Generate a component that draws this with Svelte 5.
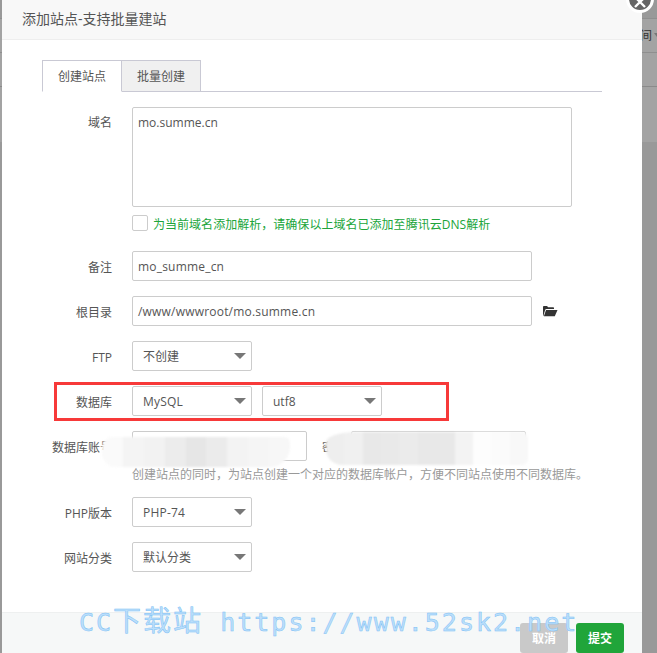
<script>
	const leftBlur = ['#fafafa', '#f4f4f4', '#f2f2f2', '#ececec', '#e6e6e6', '#ebebeb', '#f3f3f3', '#f5f5f5', '#f7f7f7'];
	const rightBlur = ['#eeeeee', '#f0f0f0', '#e8e8e8', '#e9e9e9', '#ebebeb', '#e8e8e8', '#e8e8e8', '#f3f3f3', '#fdfdfd', '#fbfbfb', '#f8f8f8'];
</script>

<div class="backdrop">
	<div class="page-lines">
		<span class="peek">间</span>
		<span class="caret"></span>
	</div>

	<div class="modal">
		<div class="title">添加站点-支持批量建站</div>

		<div class="body">
			<div class="tabs">
				<div class="tab active">创建站点</div>
				<div class="tab">批量创建</div>
			</div>

			<div class="form">
				<div class="row domain">
					<span class="label">域名</span>
					<div class="field textarea">mo.summe.cn</div>
				</div>
				<div class="row check">
					<span class="box"></span>
					<span class="tip">为当前域名添加解析，请确保以上域名已添加至腾讯云DNS解析</span>
				</div>
				<div class="row">
					<span class="label">备注</span>
					<div class="field wide latin">mo_summe_cn</div>
				</div>
				<div class="row">
					<span class="label">根目录</span>
					<div class="field wide latin">/www/wwwroot/mo.summe.cn</div>
					<svg class="folder" width="16" height="12" viewBox="0 0 16 12">
						<path d="M1 11V2.2C1 1.5 1.4 1 2 1h3l1.200 1.300H11c.6 0 1 .4 1 1V4H4.500C3.800 4 3.500 4.300 3.200 4.800L1.300 11z" fill="#333" />
						<path d="M4 5h11.500l-2.700 6.300H1.900z" fill="#333" />
					</svg>
				</div>
				<div class="row">
					<span class="label">FTP</span>
					<div class="select">不创建</div>
				</div>
				<div class="row">
					<span class="label">数据库</span>
					<div class="select latin">MySQL</div>
					<div class="select second">utf8</div>
					<div class="highlight"></div>
				</div>
				<div class="row account">
					<span class="label">数据库账号</span>
					<div class="field half"></div>
					<span class="label pass">密码</span>
					<div class="field half"></div>
					<div class="blur left">
						{#each leftBlur as shade}
							<i style="background: {shade}"></i>
						{/each}
					</div>
					<div class="blur right">
						{#each rightBlur as shade}
							<i style="background: {shade}"></i>
						{/each}
					</div>
				</div>
				<div class="help">创建站点的同时，为站点创建一个对应的数据库帐户，方便不同站点使用不同数据库。</div>
				<div class="row">
					<span class="label">PHP版本</span>
					<div class="select latin">PHP-74</div>
				</div>
				<div class="row">
					<span class="label">网站分类</span>
					<div class="select">默认分类</div>
				</div>
			</div>
		</div>

		<div class="footer">
			<button class="btn cancel">取消</button>
			<button class="btn submit">提交</button>
		</div>
	</div>

	<button class="close" aria-label="关闭">
		<svg width="14" height="14" viewBox="0 0 14 14">
			<path d="M2 2l10 10M12 2L2 12" stroke="#fff" stroke-width="2.400" fill="none" />
		</svg>
	</button>

	<div class="watermark"><span class="mark-cn">CC<b>下载站</b></span> https://www.52sk2.net</div>
</div>

<style>
	:global(body) {
		margin: 0;
		overflow: hidden;
	}

	.backdrop {
		position: relative;
		width: 657px;
		height: 653px;
		overflow: hidden;
		background: #999;
		font-family: "Open Sans", "Noto Sans CJK SC", sans-serif;
		font-size: 12px;
		color: #555;
	}

	.page-lines {
		position: absolute;
		inset: 0;
		background:
			linear-gradient(#8f8f8f, #8f8f8f) 0 18px / 100% 1px no-repeat,
			linear-gradient(#8f8f8f, #8f8f8f) 0 52px / 100% 1px no-repeat,
			linear-gradient(#8a8a8a, #8a8a8a) 0 86px / 100% 1px no-repeat,
			linear-gradient(#a3a3a3, #a3a3a3) 0 18px / 100% 124px no-repeat;
	}

	.peek {
		position: absolute;
		left: 640px;
		top: 26px;
		color: #333;
	}

	.caret {
		position: absolute;
		left: 654px;
		top: 33px;
		border-top: 4px solid #777;
		border-left: 3px solid transparent;
		border-right: 3px solid transparent;
	}

	.modal {
		position: relative;
		display: flex;
		flex-direction: column;
		box-sizing: border-box;
		width: 640px;
		height: 653px;
		margin-left: 2px;
		background: #fff;
	}

	.title {
		box-sizing: border-box;
		height: 40px;
		padding-left: 20px;
		line-height: 38px;
		font-size: 14px;
		color: #555;
		background: #f8f8f8;
		border-bottom: 1px solid #eee;
	}

	.body {
		flex: 1;
		padding: 20px 40px 0;
	}

	.tabs {
		display: flex;
		height: 32px;
		box-sizing: border-box;
		border-bottom: 1px solid #c9c9d4;
	}

	.tab {
		box-sizing: border-box;
		width: 79px;
		height: 32px;
		line-height: 31px;
		text-align: center;
		font-size: 12px;
		color: #555;
		background: #f0f0f0;
		border: 1px solid #c9c9d4;
		border-left: 0;
	}

	.tab.active {
		width: 80px;
		background: #fff;
		border-left: 1px solid #c9c9d4;
		border-bottom-color: #fff;
	}

	.form {
		padding-top: 15px;
	}

	.row {
		position: relative;
		display: flex;
		align-items: center;
		height: 30px;
		margin-bottom: 15px;
	}

	.row.domain {
		align-items: flex-start;
		height: 100px;
		margin-bottom: 8px;
	}

	.row.domain .label {
		padding-top: 1px;
		line-height: 30px;
	}

	.row.check {
		height: 16px;
		margin-bottom: 20px;
		padding-left: 90px;
	}

	.row.account {
		margin-bottom: 4px;
	}

	.label {
		flex: none;
		box-sizing: border-box;
		width: 70px;
		margin-right: 20px;
		padding-top: 2px;
		text-align: right;
		color: #555;
		white-space: nowrap;
	}

	.label.pass {
		width: 24px;
		margin: 0 5px 0 15px;
		overflow: hidden;
	}

	.field,
	.select {
		box-sizing: border-box;
		height: 30px;
		line-height: 30px;
		border: 1px solid #ccc;
		border-radius: 2px;
		background: #fff;
		padding-left: 5px;
	}

	.latin {
		letter-spacing: 0.2px;
	}

	.field.textarea {
		width: 440px;
		height: 100px;
	}

	.field.wide {
		width: 400px;
	}

	.field.half {
		width: 175px;
	}

	.folder {
		margin-left: 10px;
	}

	.select {
		position: relative;
		width: 120px;
		padding-left: 10px;
	}

	.select::after {
		content: "";
		position: absolute;
		right: 5px;
		top: 11px;
		border-top: 6px solid #777;
		border-left: 6px solid transparent;
		border-right: 6px solid transparent;
	}

	.select.second {
		margin-left: 10px;
	}

	.highlight {
		position: absolute;
		left: 12px;
		top: -4px;
		width: 395px;
		height: 39px;
		box-sizing: border-box;
		border: 3px solid #f73939;
		pointer-events: none;
	}

	.box {
		flex: none;
		box-sizing: border-box;
		width: 16px;
		height: 16px;
		margin-right: 5px;
		border: 1px solid #ccc;
		border-radius: 2px;
	}

	.tip {
		padding-top: 2px;
		letter-spacing: 0.03px;
		color: #20a53a;
	}

	.help {
		height: 32px;
		margin-left: 90px;
		line-height: 20px;
		color: #999;
	}

	.blur {
		position: absolute;
		display: flex;
		overflow: hidden;
		filter: blur(1px);
	}

	.blur i {
		flex: 1;
	}

	.blur.left {
		left: 60px;
		top: 6px;
		width: 188px;
		height: 30px;
		border-radius: 10px 6px 20px 14px;
	}

	.blur.right {
		left: 284px;
		top: 1px;
		width: 202px;
		height: 33px;
		border-radius: 30px 6px 6px 16px / 10px 6px 6px 16px;
	}

	.footer {
		position: relative;
		display: flex;
		justify-content: flex-end;
		gap: 8px;
		box-sizing: border-box;
		height: 41px;
		padding: 10px 18px 0 0;
		background: #f6f8f8;
		border-top: 1px solid #eef0f0;
	}

	.btn {
		width: 48px;
		height: 30px;
		padding: 0;
		border: 0;
		border-radius: 3px;
		color: #fff;
		font: inherit;
		font-weight: 700;
	}

	.cancel {
		background: #c9c9c9;
	}

	.submit {
		background: #20a53a;
	}

	.close {
		position: absolute;
		left: 626px;
		top: -15px;
		display: flex;
		align-items: center;
		justify-content: center;
		box-sizing: border-box;
		width: 28px;
		height: 28px;
		padding: 6px 0 0;
		border: 3px solid #fff;
		border-radius: 50%;
		background: #666;
	}

	.watermark {
		position: absolute;
		left: 79px;
		top: 604px;
		font-family: "DejaVu Sans Mono", "Noto Sans CJK SC", monospace;
		font-size: 25px;
		line-height: 36px;
		letter-spacing: 2px;
		color: #bcdffb;
		white-space: nowrap;
		-webkit-text-stroke: 0.5px #7cc0f5;
		pointer-events: none;
	}

	.mark-cn b {
		font-size: 28px;
		font-weight: 400;
	}
</style>
